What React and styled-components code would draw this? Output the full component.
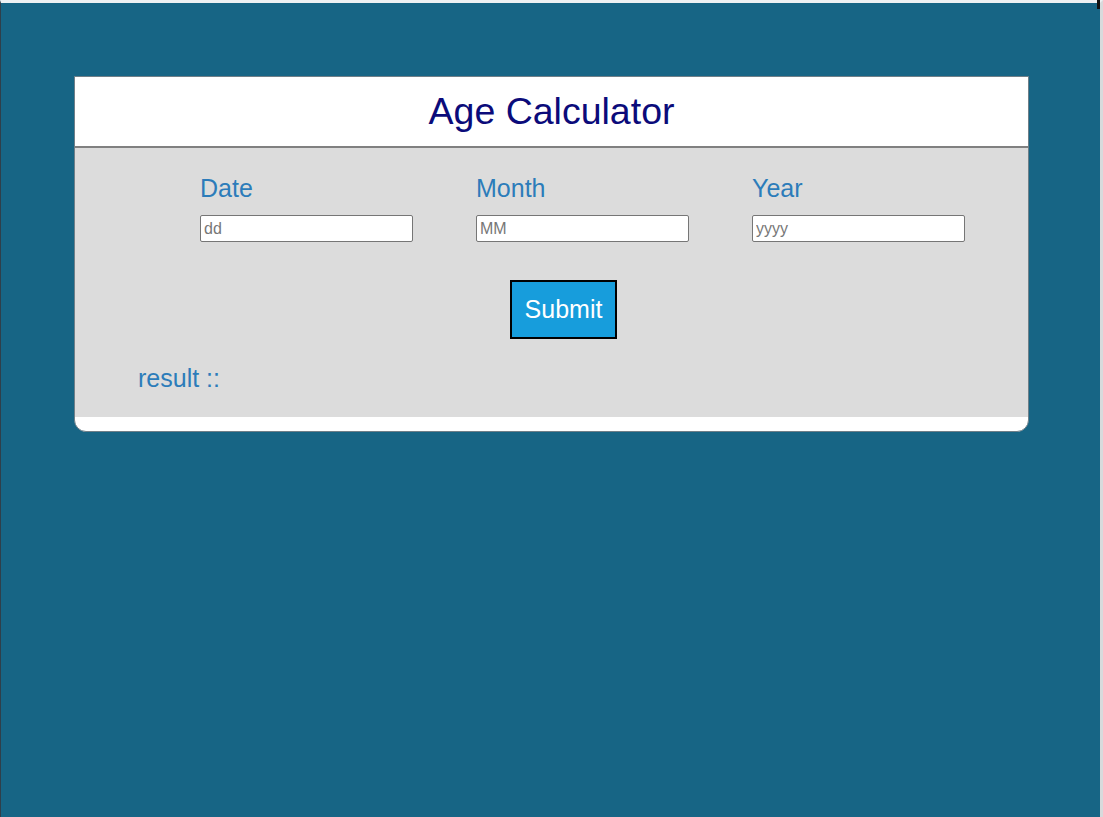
import React from "react";
import styled, { createGlobalStyle } from "styled-components";

const Global = createGlobalStyle`
  html, body { margin: 0; padding: 0; }
  body {
    background: #176585;
    font-family: "Liberation Sans", Arial, sans-serif;
  }
`;

const Frame = styled.div`
  min-height: 100vh;
  box-sizing: border-box;
  border-top: 3px solid #eef1f3;
  border-left: 1px solid #2f3f4a;
  border-right: 3px solid #d8dadc;
  padding: 73px 0 0 73px;
  position: relative;
`;

const Corner = styled.div`
  position: absolute;
  top: -3px;
  right: 0;
  width: 3px;
  height: 9px;
  background: #111;
`;

const Card = styled.div`
  width: 955px;
  box-sizing: border-box;
  background: #fff;
  border: 1px solid #6f7f88;
  border-radius: 0 0 12px 12px;
  padding-bottom: 14px;
  overflow: hidden;
`;

const Header = styled.div`
  height: 69px;
  display: flex;
  align-items: center;
  justify-content: center;
  border-bottom: 2px solid #808080;
`;

const Title = styled.h1`
  margin: 0;
  font-size: 37.5px;
  font-weight: normal;
  color: #0b0b7a;
  line-height: 1;
`;

const Body = styled.div`
  background: #dcdcdc;
  padding: 26px 0 25px;
`;

const Fields = styled.div`
  display: grid;
  grid-template-columns: repeat(3, 213px);
  column-gap: 63px;
  padding-left: 125px;
`;

const Field = styled.div`
  display: flex;
  flex-direction: column;
  gap: 13px;
`;

const Label = styled.label`
  font-size: 25px;
  line-height: 28px;
  color: #2c7cba;
`;

const Input = styled.input`
  box-sizing: border-box;
  width: 213px;
  height: 27px;
  border: 1px solid #767676;
  border-radius: 2px;
  background: #fff;
  padding: 0 3px;
  font-family: "Liberation Sans", Arial, sans-serif;
  font-size: 16px;
  outline: none;
  &::placeholder { color: #777; }
`;

const ButtonRow = styled.div`
  display: flex;
  justify-content: center;
  padding-left: 24px;
  margin-top: 38px;
`;

const Button = styled.button`
  background: #179ddc;
  color: #fff;
  border: 2px solid #000;
  padding: 13px 13px;
  font-family: "Liberation Sans", Arial, sans-serif;
  font-size: 25px;
  line-height: 29px;
  cursor: pointer;
`;

const Result = styled.div`
  margin-top: 25px;
  padding-left: 63px;
  font-size: 25px;
  line-height: 28px;
  color: #2c7cba;
`;

export default function App() {
  return (
    <>
      <Global />
      <Frame>
        <Corner />
        <Card>
          <Header>
            <Title>Age Calculator</Title>
          </Header>
          <Body>
            <Fields>
              <Field>
                <Label>Date</Label>
                <Input placeholder="dd" />
              </Field>
              <Field>
                <Label>Month</Label>
                <Input placeholder="MM" />
              </Field>
              <Field>
                <Label>Year</Label>
                <Input placeholder="yyyy" />
              </Field>
            </Fields>
            <ButtonRow>
              <Button>Submit</Button>
            </ButtonRow>
            <Result>result ::</Result>
          </Body>
        </Card>
      </Frame>
    </>
  );
}
